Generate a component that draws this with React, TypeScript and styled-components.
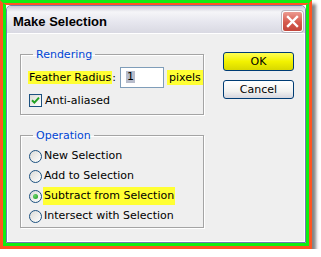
import React from 'react';
import styled, { createGlobalStyle } from 'styled-components';

const GlobalStyle = createGlobalStyle`
  html, body {
    margin: 0;
    padding: 0;
    background: #fff;
  }
  body {
    font-family: "DejaVu Sans", Verdana, sans-serif;
    font-size: 11px;
    color: #000;
  }
`;

const App = () => {
  return (
    <>
      <GlobalStyle />
      <Frame>
        <InnerFrame>
          <Window>
            <TitleBar>
              <Title>Make Selection</Title>
              <CloseButton aria-label="Close">
                <svg width="13" height="13" viewBox="0 0 13 13">
                  <path d="M2 2 L11 11 M11 2 L2 11" stroke="#fff" strokeWidth="2.4" strokeLinecap="square" />
                </svg>
              </CloseButton>
            </TitleBar>
            <Body>
              <LeftColumn>
                <Group>
                  <Legend>Rendering</Legend>
                  <RadiusRow>
                    <Marked>Feather Radius</Marked>:
                    <NumberBox>
                      <Selected>1</Selected>
                    </NumberBox>
                    <Marked $tall>pixels</Marked>
                  </RadiusRow>
                  <CheckRow>
                    <CheckBox>
                      <svg width="9" height="9" viewBox="0 0 9 9">
                        <path d="M1 4.2 L3.4 6.6 L8 1.6" stroke="#21a121" strokeWidth="2" fill="none" />
                      </svg>
                    </CheckBox>
                    <span>Anti-aliased</span>
                  </CheckRow>
                </Group>
                <Group $rows>
                  <Legend>Operation</Legend>
                  <RadioRow>
                    <Radio />
                    <OptionText>New Selection</OptionText>
                  </RadioRow>
                  <RadioRow>
                    <Radio />
                    <OptionText>Add to Selection</OptionText>
                  </RadioRow>
                  <RadioRow>
                    <Radio $checked />
                    <OptionText $marked>Subtract from Selection</OptionText>
                  </RadioRow>
                  <RadioRow>
                    <Radio />
                    <OptionText>Intersect with Selection</OptionText>
                  </RadioRow>
                </Group>
              </LeftColumn>
              <ButtonColumn>
                <Button $yellow>OK</Button>
                <Button>Cancel</Button>
              </ButtonColumn>
            </Body>
          </Window>
        </InnerFrame>
      </Frame>
    </>
  );
};

const Frame = styled.div`
  display: inline-block;
  vertical-align: top;
  border: 3px solid #ff5522;
  border-top-color: #11ee11;
  box-shadow: 4px 4px 3px rgba(50, 50, 50, 0.6);
`;

const InnerFrame = styled.div`
  border: 3px solid #11ee11;
  border-top: 2px solid #ff5522;
`;

const Window = styled.div`
  width: 298px;
  height: 236px;
  border: 1px solid #6d7db0;
  border-radius: 5px 5px 0 0;
  background: #efefef;
  display: flex;
  flex-direction: column;
  box-shadow: inset 0 0 0 1px #fff;
`;

const TitleBar = styled.div`
  height: 28px;
  box-sizing: border-box;
  padding: 4px 2px 0 6px;
  display: flex;
  align-items: center;
  justify-content: space-between;
  border-radius: 4px 4px 0 0;
  background: linear-gradient(#c9c9d6 0%, #f5f5f8 22%, #e6e6ee 60%, #d9d9e2 100%);
  border-bottom: 1px solid #fff;
`;

const Title = styled.div`
  font-family: "Liberation Sans", Arial, sans-serif;
  font-weight: bold;
  font-size: 13px;
  color: #000;
`;

const CloseButton = styled.button`
  width: 21px;
  height: 21px;
  padding: 0;
  display: flex;
  align-items: center;
  justify-content: center;
  border: 1px solid #fff;
  border-radius: 3px;
  background: linear-gradient(#ec9a90, #d5594c 55%, #c3463b);
  box-shadow: 0 0 0 1px #b9b4bd;
`;

const Body = styled.div`
  flex: 1;
  display: flex;
  padding: 14px 12px 0 13px;
`;

const LeftColumn = styled.div`
  display: flex;
  flex-direction: column;
  gap: 14px;
`;

const Group = styled.fieldset<{ $rows?: boolean }>`
  margin: 0;
  width: 184px;
  box-sizing: border-box;
  min-width: 0;
  padding: ${(p) => (p.$rows ? '4px 0 1px 7px' : '0 0 6px 7px')};
  border: 1px solid #a4a4a4;
  box-shadow: inset 1px 1px 0 #fff, 1px 1px 0 #fff;
`;

const Legend = styled.legend`
  color: #0046d5;
  padding: 0 3px;
  margin-left: 5px;
  line-height: 13px;
`;

const RadiusRow = styled.div`
  display: flex;
  align-items: center;
  height: 22px;
  margin-top: 5px;
`;

const Marked = styled.span<{ $tall?: boolean }>`
  background: #ffff33;
  line-height: ${(p) => (p.$tall ? '15px' : '13px')};
  padding: 0 ${(p) => (p.$tall ? '2px' : '1px')};
  margin-left: ${(p) => (p.$tall ? '3px' : '0')};
`;

const NumberBox = styled.div`
  width: 44px;
  height: 21px;
  box-sizing: border-box;
  margin-left: 4px;
  padding-left: 5px;
  display: flex;
  align-items: center;
  background: #fff;
  border: 1px solid #7f9db9;
`;

const Selected = styled.span`
  background: #b7bccb;
  padding: 0 1px;
  line-height: 12px;
`;

const CheckRow = styled.div`
  display: flex;
  align-items: center;
  height: 16px;
  margin-top: 4px;
`;

const CheckBox = styled.span`
  width: 11px;
  height: 11px;
  margin: 0 3px 0 1px;
  display: flex;
  align-items: center;
  justify-content: center;
  border: 1px solid #1c5180;
  background: linear-gradient(135deg, #dcdcd7, #fff);
`;

const RadioRow = styled.div`
  display: flex;
  align-items: center;
  height: 20px;
`;

const Radio = styled.span<{ $checked?: boolean }>`
  width: 11px;
  height: 11px;
  margin-left: 1px;
  border: 1px solid #1c5180;
  border-radius: 50%;
  display: flex;
  align-items: center;
  justify-content: center;
  background: linear-gradient(135deg, #dcdcd7, #fff);
  &::after {
    content: '';
    display: ${(p) => (p.$checked ? 'block' : 'none')};
    width: 5px;
    height: 5px;
    border-radius: 50%;
    background: radial-gradient(circle at 35% 35%, #6ad36a, #1c9a1c);
  }
`;

const OptionText = styled.span<{ $marked?: boolean }>`
  margin-left: 1px;
  padding: 2px 1px;
  line-height: 14px;
  background: ${(p) => (p.$marked ? '#ffff33' : 'transparent')};
`;

const ButtonColumn = styled.div`
  display: flex;
  flex-direction: column;
  gap: 9px;
  margin: 4px 0 0 19px;
`;

const Button = styled.button<{ $yellow?: boolean }>`
  width: 71px;
  height: 19px;
  padding: 0;
  font-family: "DejaVu Sans", Verdana, sans-serif;
  font-size: 11px;
  color: #000;
  border: 1px solid #003c74;
  border-radius: 3px;
  background: ${(p) =>
    p.$yellow
      ? 'linear-gradient(#ffff55, #f2f200 50%, #d8d800)'
      : 'linear-gradient(#ffffff, #f2f2f0 60%, #d6d6de)'};
`;

export default App;
